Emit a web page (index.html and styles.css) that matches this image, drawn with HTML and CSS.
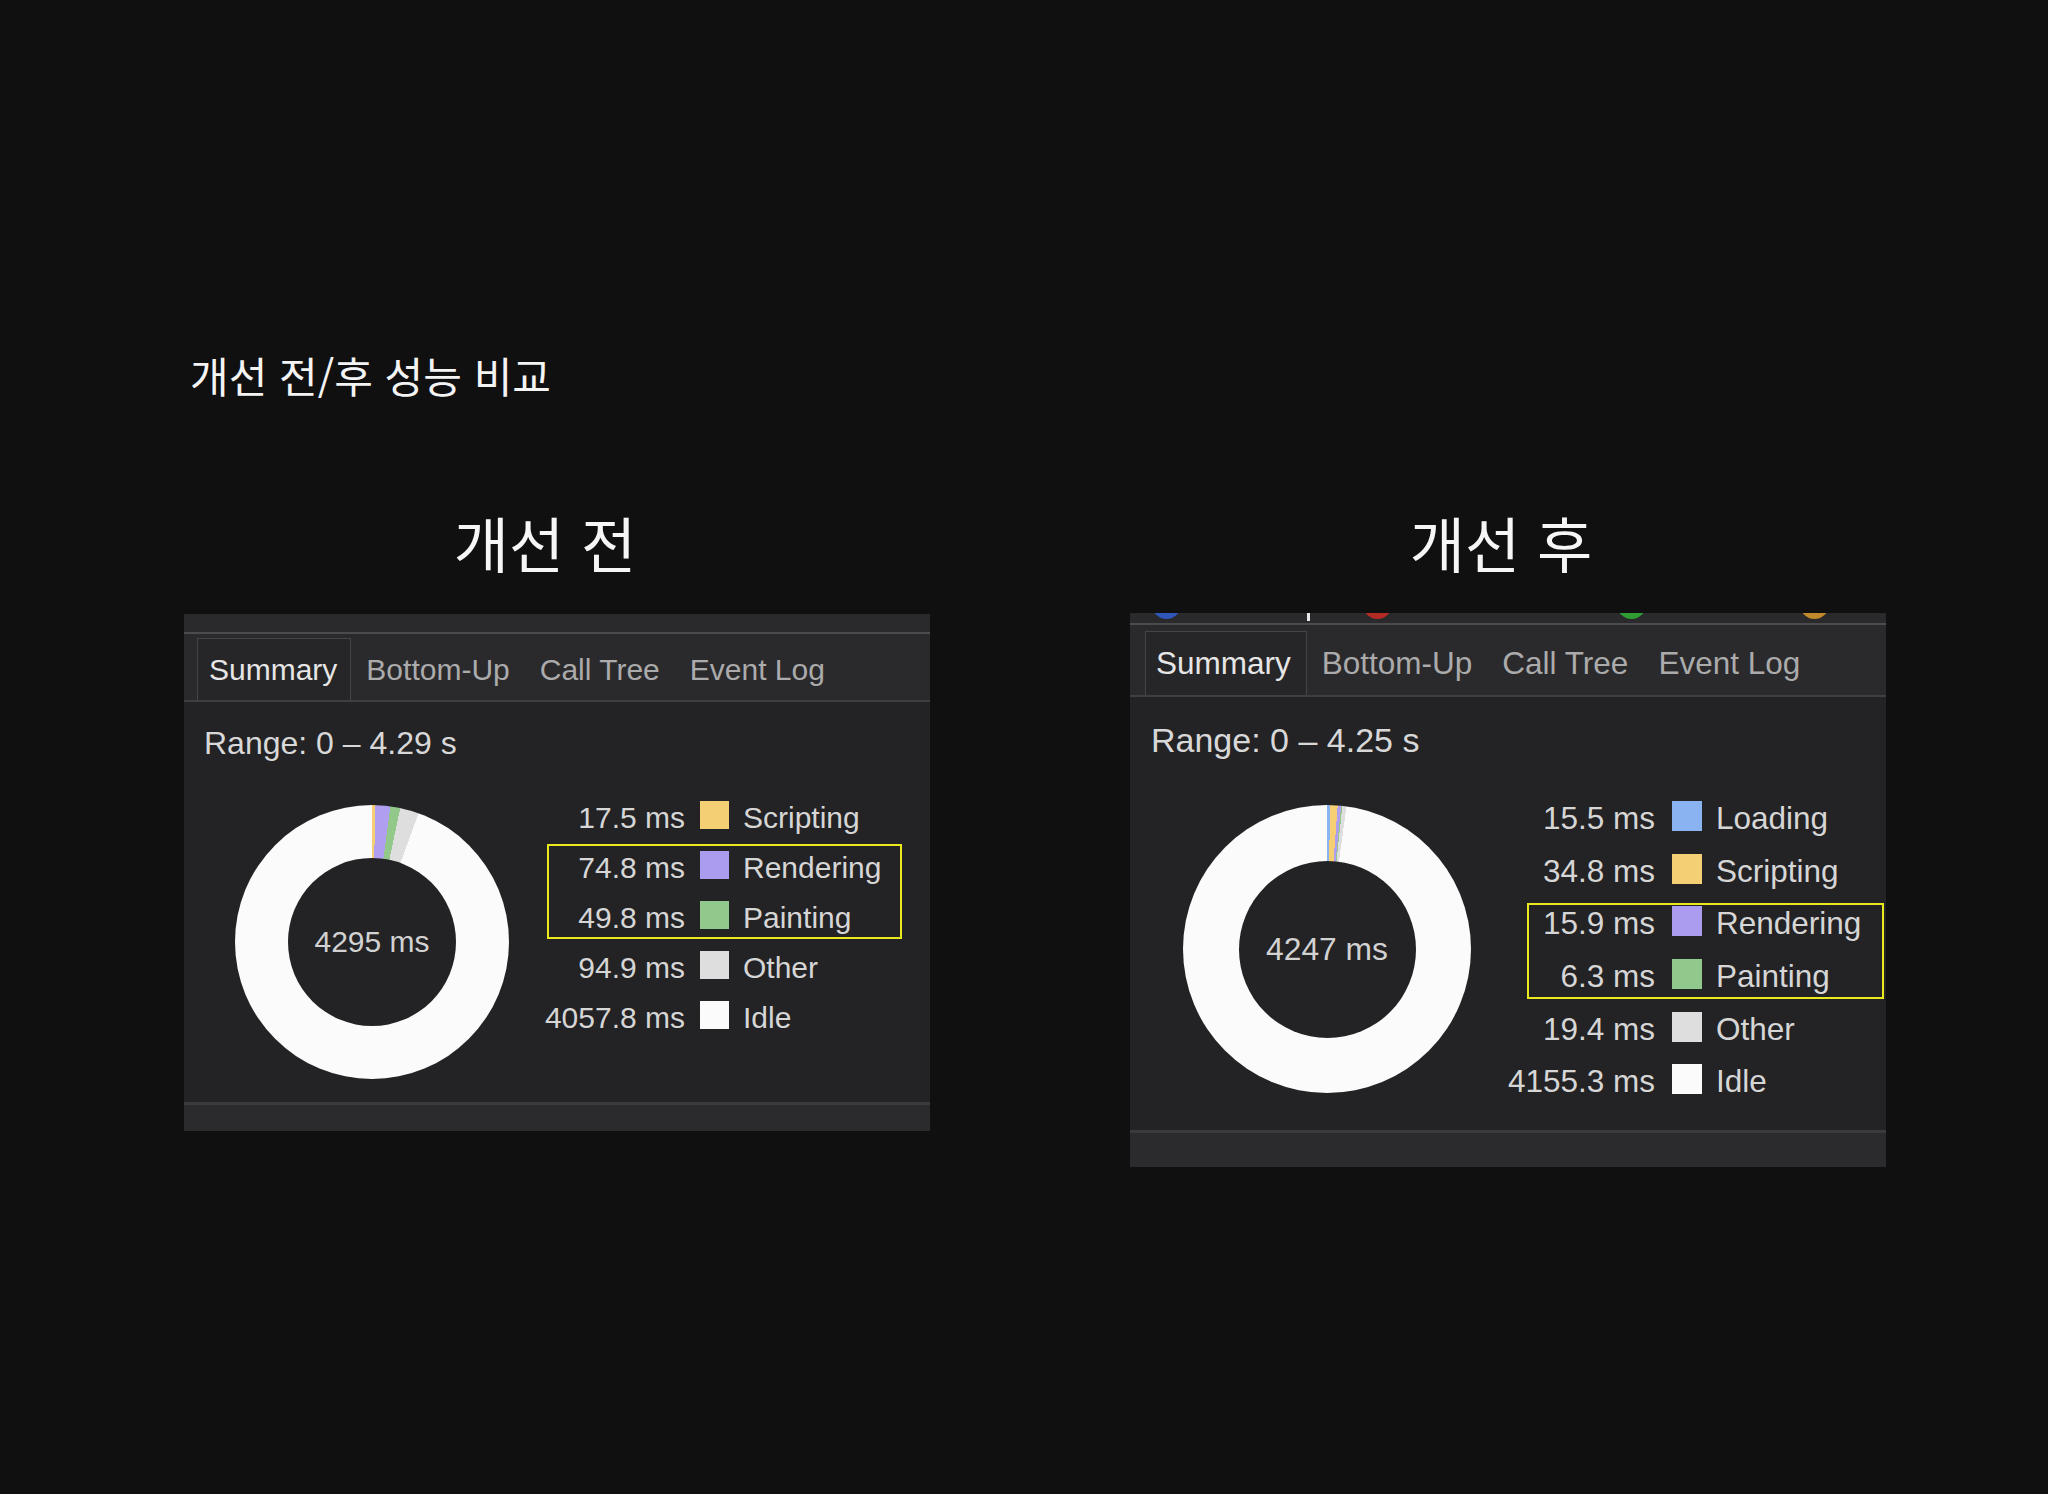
FILE: index.html
```html
<!DOCTYPE html>
<html lang="ko">
<head>
<meta charset="utf-8">
<title>개선 전/후 성능 비교</title>
<link rel="stylesheet" href="styles.css">
</head>
<body>
<main class="page">
  <h1 class="title">개선 전/후 성능 비교</h1>
  <section class="compare">
    <div class="col col--before">
      <h2 class="heading">개선 전</h2>
      <div class="panel">
        <div class="strip"></div>
        <nav class="tabs">
          <span class="tab tab--active">Summary</span>
          <span class="tab">Bottom-Up</span>
          <span class="tab">Call Tree</span>
          <span class="tab">Event Log</span>
        </nav>
        <div class="body">
          <div class="range">Range: 0 – 4.29 s</div>
          <div class="chart">
            <div class="donut" style="background: conic-gradient(#f4cf74 0deg 1.47deg, #b09ef0 1.47deg 7.74deg, #92c98b 7.74deg 11.91deg, #dedede 11.91deg 19.86deg, #fbfbfb 19.86deg 360deg);">
              <div class="hole">4295 ms</div>
            </div>
            <div class="legend">
              <span class="val">17.5 ms</span><span class="sw sw--scripting"></span><span class="lab">Scripting</span>
              <span class="val">74.8 ms</span><span class="sw sw--rendering"></span><span class="lab">Rendering</span>
              <span class="val">49.8 ms</span><span class="sw sw--painting"></span><span class="lab">Painting</span>
              <span class="val">94.9 ms</span><span class="sw sw--other"></span><span class="lab">Other</span>
              <span class="val">4057.8 ms</span><span class="sw sw--idle"></span><span class="lab">Idle</span>
              <div class="highlight"></div>
            </div>
          </div>
        </div>
        <div class="footer"></div>
      </div>
    </div>

    <div class="col col--after">
      <h2 class="heading">개선 후</h2>
      <div class="panel">
        <div class="strip">
          <span class="mark mark--blue"></span>
          <span class="tick"></span>
          <span class="mark mark--red"></span>
          <span class="mark mark--green"></span>
          <span class="mark mark--orange"></span>
        </div>
        <nav class="tabs">
          <span class="tab tab--active">Summary</span>
          <span class="tab">Bottom-Up</span>
          <span class="tab">Call Tree</span>
          <span class="tab">Event Log</span>
        </nav>
        <div class="body">
          <div class="range">Range: 0 – 4.25 s</div>
          <div class="chart">
            <div class="donut" style="background: conic-gradient(#8ab4f1 0deg 1.31deg, #f4cf74 1.31deg 4.26deg, #b09ef0 4.26deg 5.61deg, #92c98b 5.61deg 6.15deg, #dedede 6.15deg 7.79deg, #fbfbfb 7.79deg 360deg);">
              <div class="hole">4247 ms</div>
            </div>
            <div class="legend">
              <span class="val">15.5 ms</span><span class="sw sw--loading"></span><span class="lab">Loading</span>
              <span class="val">34.8 ms</span><span class="sw sw--scripting"></span><span class="lab">Scripting</span>
              <span class="val">15.9 ms</span><span class="sw sw--rendering"></span><span class="lab">Rendering</span>
              <span class="val">6.3 ms</span><span class="sw sw--painting"></span><span class="lab">Painting</span>
              <span class="val">19.4 ms</span><span class="sw sw--other"></span><span class="lab">Other</span>
              <span class="val">4155.3 ms</span><span class="sw sw--idle"></span><span class="lab">Idle</span>
              <div class="highlight"></div>
            </div>
          </div>
        </div>
        <div class="footer"></div>
      </div>
    </div>
  </section>
</main>
</body>
</html>
```

FILE: styles.css
```css
* { box-sizing: border-box; }

html, body {
  margin: 0;
  padding: 0;
  background: #111011;
}

body {
  width: 2048px;
  height: 1494px;
  overflow: hidden;
  font-family: "Liberation Sans", Arial, sans-serif;
}

.page {
  padding-top: 354px;
}

.title {
  margin: 0 0 0 190px;
  font-family: "Noto Sans CJK KR", "Noto Sans", sans-serif;
  font-weight: 400;
  font-size: 42px;
  line-height: 42px;
  color: #f4f4f4;
}

.compare {
  display: flex;
  gap: 200px;
  margin-top: 116px;
  padding-left: 184px;
}

.col--before { width: 746px; }
.col--after  { width: 756px; }

.heading {
  margin: 0;
  font-family: "Noto Sans CJK KR", "Noto Sans", sans-serif;
  font-weight: 400;
  font-size: 60px;
  line-height: 60px;
  color: #f6f6f6;
  text-align: center;
}

.col--before .heading { padding-right: 24px; margin-bottom: 42px; }
.col--after  .heading { padding-right: 14px; margin-bottom: 41px; }

/* ---------- panel ---------- */
.panel {
  background: #232224;
}

.strip {
  position: relative;
  background: #2a292b;
  border-bottom: 2px solid #4b4a4c;
  overflow: hidden;
}
.col--before .strip { height: 20px; }
.col--after  .strip { height: 12px; }

.mark {
  position: absolute;
  top: -23px;
  width: 29px;
  height: 29px;
  border-radius: 50%;
}
.mark--blue   { left: 22px;  background: #2f56b9; }
.mark--red    { left: 233px; background: #b42a25; }
.mark--green  { left: 487px; background: #2e9c32; }
.mark--orange { left: 670px; background: #c08a2a; }
.tick {
  position: absolute;
  left: 177px;
  top: 0;
  width: 3px;
  height: 8px;
  background: #e8e8e8;
}

.tabs {
  display: flex;
  align-items: flex-end;
  background: #2a292b;
  border-bottom: 2px solid #3f3e40;
}
.col--before .tabs { padding: 4px 0 0 13px; height: 68px; }
.col--after  .tabs { padding: 6px 0 0 15px; height: 72px; }

.tab {
  color: #ababab;
  white-space: nowrap;
  border: 1px solid transparent;
  border-bottom: 0;
}
.col--before .tab { font-size: 30px; height: 62px; line-height: 61px; padding: 0 14px; }
.col--after  .tab { font-size: 31.5px; height: 64px; line-height: 63px; padding: 0 14px; }

.tab--active {
  color: #e6e6e6;
  background: #262527;
  border-color: #454446;
}
.col--before .tab--active { padding: 0 13px 0 11px; }
.col--after  .tab--active { padding: 0 15px 0 10px; }

.body {
  display: flex;
  flex-direction: column;
  align-items: flex-start;
  border-bottom: 3px solid #3b3a3c;
}
.col--before .body { height: 403px; padding: 23px 20px 0; }
.col--after  .body { height: 436px; padding: 24px 21px 0; }

.range {
  color: #d8d8d8;
  white-space: nowrap;
}
.col--before .range { font-size: 32px; line-height: 37px; }
.col--after  .range { font-size: 34px; line-height: 39px; }

.chart {
  display: flex;
  align-items: flex-start;
}
.col--before .chart { margin-top: 28px; }
.col--after  .chart { margin-top: 30px; }

.donut {
  display: flex;
  align-items: center;
  justify-content: center;
  border-radius: 50%;
  flex: none;
}
.col--before .donut { width: 274px; height: 274px; margin: 15px 26px 0 31px; }
.col--after  .donut { width: 288px; height: 288px; margin: 15px 24px 0 32px; }

.hole {
  display: flex;
  align-items: center;
  justify-content: center;
  border-radius: 50%;
  background: #232224;
  color: #d2d2d2;
  white-space: nowrap;
}
.col--before .hole { width: 168px; height: 168px; font-size: 30px; }
.col--after  .hole { width: 177px; height: 177px; font-size: 31.8px; }

/* ---------- legend ---------- */
.legend {
  position: relative;
  display: grid;
  align-items: center;
  color: #d6d6d6;
  white-space: nowrap;
}
.legend .val,
.legend .lab { padding-top: 5px; }

.col--before .legend {
  grid-template-columns: 150px 29px auto;
  grid-auto-rows: 50px;
  column-gap: 15px;
  font-size: 30px;
}
.col--before .legend .lab { margin-left: -1px; }
.col--after .legend {
  grid-template-columns: 160px 30px auto;
  grid-auto-rows: 52.6px;
  column-gap: 16px;
  font-size: 31.5px;
}
.col--after .legend .sw { margin-left: 1px; }
.col--after .legend .lab { margin-left: -1px; }

.val { text-align: right; }

.sw { display: block; }
.col--before .sw { width: 29px; height: 28px; }
.col--after  .sw { width: 30px; height: 30px; }

.sw--loading   { background: #8ab4f1; }
.sw--scripting { background: #f4cf74; }
.sw--rendering { background: #ac9cf0; }
.sw--painting  { background: #90c98b; }
.sw--other     { background: #dedede; }
.sw--idle      { background: #fbfbfb; }

.highlight {
  position: absolute;
  border: 2px solid #e9e91c;
  pointer-events: none;
}
.col--before .highlight { left: 12px; top: 54px; width: 355px; height: 95px; }
.col--after  .highlight { left: 32px; top: 113px; width: 357px; height: 96px; }

.footer {
  background: #2b2a2c;
}
.col--before .footer { height: 26px; }
.col--after  .footer { height: 34px; }
```
